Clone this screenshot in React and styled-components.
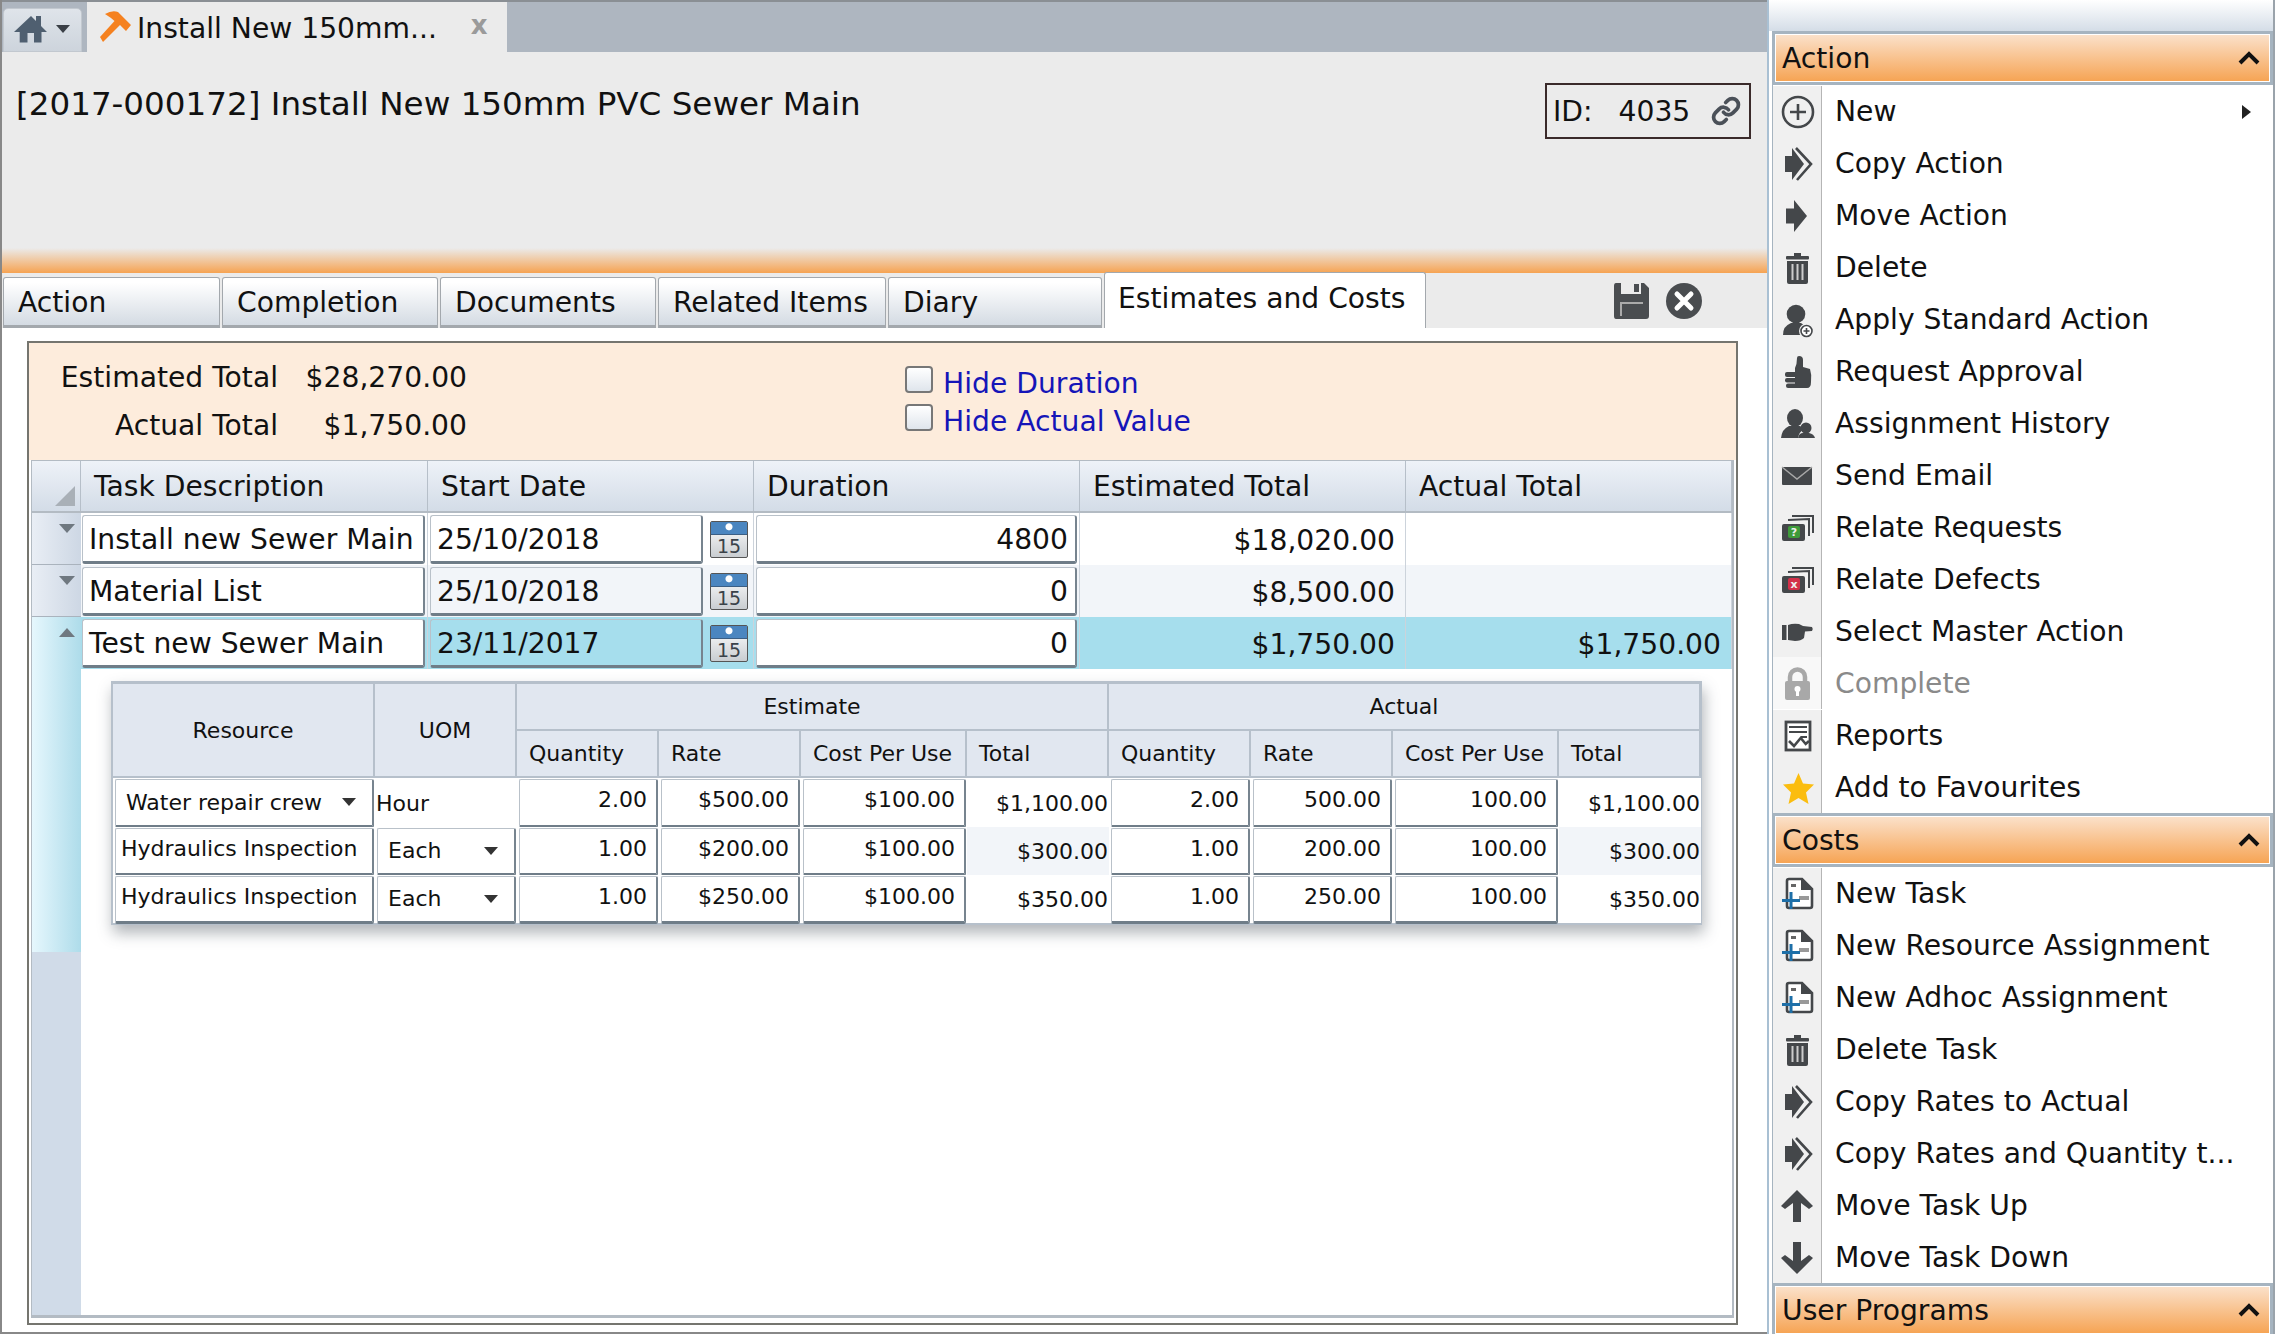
import styled, { createGlobalStyle } from 'styled-components';
import { Link } from 'lucide-react';

const GlobalStyle = createGlobalStyle`
	html, body {
		margin: 0;
		padding: 0;
		width: 2275px;
		height: 1334px;
		overflow: hidden;
		background: #fff;
	}
	* {
		box-sizing: border-box;
	}
	body {
		font-family: 'DejaVu Sans', Verdana, sans-serif;
		font-size: 28.2px;
		color: #111;
	}
`;

const Frame = styled.div`
	display: flex;
	width: 2275px;
	height: 1334px;
	overflow: hidden;
`;

const Main = styled.div`
	display: flex;
	flex-direction: column;
	width: 1767px;
	height: 100%;
	border-left: 2px solid #888;
	border-bottom: 2px solid #888;
	background: #fff;
`;

const TopBar = styled.div`
	display: flex;
	align-items: flex-end;
	height: 52px;
	padding-left: 1px;
	background: #aeb6c0;
	border-top: 2px solid #8a8f94;
`;

const HomeBtn = styled.div`
	display: flex;
	align-items: center;
	gap: 9px;
	width: 79px;
	height: 44px;
	padding: 0 0 2px 10px;
	background: linear-gradient(#dfe4ea, #cdd4dc);
	border-radius: 5px 5px 0 0;
	border: 1px solid #c2c8cf;
`;

const Caret = styled.span`
	width: 0;
	height: 0;
	border-left: 7px solid transparent;
	border-right: 7px solid transparent;
	border-top: 8px solid ${(p) => p.color || '#3a3f46'};
`;

const DocTab = styled.div`
	display: flex;
	align-items: center;
	width: 420px;
	height: 50px;
	margin-left: 5px;
	padding-left: 13px;
	background: #ebebeb;
`;

const DocTitle = styled.span`
	margin: 2px 0 0 5px;
	white-space: nowrap;
`;

const DocClose = styled.span`
	margin-left: 34px;
	margin-bottom: 4px;
	font-weight: 700;
	font-size: 26px;
	color: #9a9a9a;
`;

const Header = styled.div`
	display: flex;
	justify-content: space-between;
	align-items: flex-start;
	height: 196px;
	padding: 32px 16px 0 14px;
	background: #ebebeb;
`;

const Title = styled.h1`
	margin: 0;
	font-size: 32.6px;
	font-weight: 400;
	line-height: 40px;
`;

const IdBox = styled.div`
	display: flex;
	align-items: center;
	width: 206px;
	height: 56px;
	margin-top: -1px;
	padding-left: 6px;
	border: 2px solid #3a2a2a;
	white-space: nowrap;
`;

const IdValue = styled.span`
	margin-left: 26px;
`;

const IdLink = styled(Link)`
	margin-left: 21px;
	color: #4a5058;
`;

const OrangeBar = styled.div`
	height: 25px;
	background: linear-gradient(#ebebeb, #f6a352);
`;

const TabStrip = styled.div`
	display: flex;
	align-items: flex-end;
	gap: 2px;
	height: 55px;
	padding-left: 1px;
	background: #ebebeb;
`;

const Tab = styled.div`
	display: flex;
	align-items: center;
	width: ${(p) => p.w}px;
	height: 51px;
	padding: 2px 0 0 14px;
	background: linear-gradient(#fff 10%, #d4dbe3);
	border: 1px solid #a3a8ad;
	border-bottom-width: 3px;
	border-radius: 3px 3px 0 0;
	white-space: nowrap;
`;

const ActiveTab = styled(Tab)`
	height: 56px;
	padding: 0 0 4px 13px;
	background: #fff;
	border-bottom: none;
`;

const TabTools = styled.div`
	display: flex;
	gap: 17px;
	margin-left: 185px;
	padding-bottom: 9px;
`;

const Content = styled.div`
	flex: 1;
	min-height: 0;
	padding: 13px 29px 7px 25px;
`;

const Panel = styled.div`
	display: flex;
	flex-direction: column;
	height: 100%;
	padding: 0 2px 5px 2px;
	border: 2px solid #75756f;
`;

const Summary = styled.div`
	display: flex;
	height: 117px;
	margin: 0 -2px;
	padding-top: 10px;
	background: #fdecdc;
`;

const Totals = styled.div`
	display: grid;
	grid-template-columns: 249px 189px;
	grid-auto-rows: 48px;
	align-items: center;
	justify-items: end;
	width: 876px;
`;

const Toggles = styled.div`
	display: flex;
	flex-direction: column;
	gap: 11px;
	padding-top: 17px;
`;

const ToggleRow = styled.label`
	display: flex;
	align-items: center;
	gap: 10px;
	height: 27px;
	color: #1515b8;
`;

const Check = styled.span`
	width: 28px;
	height: 27px;
	margin-bottom: 9px;
	background: linear-gradient(#fff, #dfe5ec);
	border: 2px solid #777;
	border-radius: 4px;
`;

const Grid = styled.div`
	display: flex;
	flex-direction: column;
	flex: 1;
	min-height: 0;
	border: 1px solid #b3bbc3;
	border-width: 1px 2px 3px 1px;
`;

const GridHead = styled.div`
	display: grid;
	grid-template-columns: 49px 347px 326px 326px 326px 1fr;
	height: 52px;
	background: linear-gradient(#eef2f8, #d3dce7);
	border-bottom: 2px solid #b3bbc3;
`;

const HeadCell = styled.div`
	display: flex;
	align-items: center;
	padding-left: 13px;
	border-right: 1px solid #b6bfc9;
`;

const Corner = styled(HeadCell)`
	align-items: flex-end;
	justify-content: flex-end;
	padding: 0 5px 5px 0;
	&::after {
		content: '';
		border-left: 20px solid transparent;
		border-bottom: 20px solid #a9b0b7;
	}
`;

const GridBody = styled.div`
	display: flex;
	flex: 1;
	min-height: 0;
`;

const Gutter = styled.div`
	width: 49px;
	background: #d0dbe8;
`;

const GutterCell = styled.div`
	display: flex;
	justify-content: flex-end;
	height: ${(p) => p.h}px;
	padding: 11px 6px 0 0;
	background: ${(p) =>
		p.open
			? 'linear-gradient(90deg, #e6f7fd, #aedcea)'
			: 'linear-gradient(90deg, #e9eef5, #cdd7e4)'};
	border-bottom: ${(p) => (p.open ? 'none' : '1px solid #aab3bd')};
`;

const Toggle = styled.span`
	width: 0;
	height: 0;
	border-left: 8px solid transparent;
	border-right: 8px solid transparent;
	${(p) => (p.up ? 'border-bottom' : 'border-top')}: 9px solid #6f7880;
`;

const Rows = styled.div`
	flex: 1;
	min-width: 0;
`;

const Row = styled.div`
	display: grid;
	grid-template-columns: 347px 326px 326px 326px 1fr;
	height: 52px;
	background: ${(p) => p.bg || '#fff'};
`;

const Cell = styled.div`
	display: flex;
	align-items: center;
	justify-content: ${(p) => (p.start ? 'flex-start' : 'flex-end')};
	padding: ${(p) => (p.start ? `1px 2px 1px ${p.first ? 1 : 2}px` : '2px 10px 0 0')};
	border-right: 1px solid #ccd3db;
`;

const Input = styled.div`
	display: flex;
	align-items: center;
	justify-content: ${(p) => (p.right ? 'flex-end' : 'flex-start')};
	width: ${(p) => (p.w ? `${p.w}px` : '100%')};
	height: 49px;
	padding: ${(p) => (p.right ? '2px 7px 0 0' : '2px 0 0 6px')};
	background: ${(p) => p.bg || '#fff'};
	border: 1px solid #b9c1c9;
	border-bottom: 3px solid #6f7d88;
	border-right: 2px solid #77848f;
	border-radius: 3px;
	white-space: nowrap;
	overflow: hidden;
`;

const Detail = styled.div`
	display: grid;
	grid-template-columns: 262px 142px 142px 142px 166px 142px 142px 142px 166px 142px;
	grid-template-rows: 47px 47px 49px 48px 48px;
	width: 1591px;
	margin: 12px 0 0 30px;
	border: 2px solid #b6c0cb;
	border-top-width: 3px;
	background: #fff;
	font-size: 22px;
	box-shadow: 2px 8px 14px rgba(60, 70, 80, 0.4);
`;

const DHead = styled.div`
	display: flex;
	align-items: center;
	justify-content: ${(p) => (p.left ? 'flex-start' : 'center')};
	padding-left: ${(p) => (p.left ? '12px' : 0)};
	${(p) => p.rows && 'grid-row: 1 / span 2;'}
	${(p) => p.cols && `grid-column: span ${p.cols};`}
	background: #e1e7f0;
	border-right: 2px solid #b6c0cb;
	border-bottom: 2px solid #b6c0cb;
`;

const DCell = styled.div`
	display: flex;
	align-items: center;
	justify-content: ${(p) => (p.right ? 'flex-end' : 'flex-start')};
	padding: ${(p) => (p.right ? '1px 1px 0 0' : '1px 0 0 1px')};
	background: ${(p) => p.bg || '#fff'};
	min-width: 0;
`;

const DInput = styled.div`
	display: flex;
	align-items: center;
	justify-content: ${(p) => (p.right ? 'flex-end' : 'space-between')};
	height: calc(100% + 1px);
	margin: 0 1px;
	width: calc(100% - 2px);
	padding: ${(p) => (p.right ? '0 9px 5px 0' : `0 16px ${p.lift ? 4 : 0}px ${p.pad}px`)};
	background: #fff;
	border: 1px solid #b9c1c9;
	border-bottom: 3px solid #6f7d88;
	border-right: 2px solid #77848f;
	border-radius: 2px;
	white-space: nowrap;
	overflow: hidden;
`;

const Calendar = styled.div`
	display: flex;
	flex-direction: column;
	width: 38px;
	height: 37px;
	margin-left: 7px;
	border: 1px solid #555;
	border-radius: 2px;
	background: linear-gradient(#fff, #c9cdd1);
	font-size: 19px;
	line-height: 23px;
	text-align: center;
	color: #3a4249;
	&::before {
		content: '';
		flex: none;
		height: 12px;
		background: radial-gradient(circle at 50% 40%, #fff 3px, transparent 4px), #4b86c0;
		border-bottom: 1px solid #3b5f85;
	}
`;

const Side = styled.aside`
	display: flex;
	flex-direction: column;
	width: 508px;
	height: 100%;
	padding-left: 3px;
	border-left: 2px solid #a9c0d3;
	border-right: 2px solid #9aa3ab;
	background: #fff;
`;

const SideTop = styled.div`
	flex: none;
	height: 31px;
	margin-left: -3px;
	background: linear-gradient(#fff, #d4dde7);
`;

const SecHead = styled.div`
	flex: none;
	display: flex;
	align-items: center;
	justify-content: space-between;
	height: 54px;
	padding: 0 10px 0 7px;
	background: linear-gradient(#fbe2cc, #f6a352);
	border: 3px solid #a6b4c0;
	outline: 1px solid #fff;
	outline-offset: -4px;
`;

const Chevron = styled.svg`
	width: 22px;
	height: 14px;
`;

const Item = styled.div`
	flex: none;
	display: flex;
	align-items: center;
	height: 52px;
	padding-top: ${(p) => (p.off ? 0 : 1)}px;
	color: ${(p) => (p.off ? '#8a8a8a' : '#111')};
	border-left: 1px solid #a6b4c0;
`;

const IconCol = styled.div`
	display: flex;
	align-items: center;
	justify-content: center;
	width: 49px;
	height: 52px;
	margin-right: 13px;
	background: ${(p) => (p.off ? '#f8f8f8' : '#f0f0f0')};
	border-right: 1px solid #b5b5b5;
`;

const MoreArrow = styled.span`
	margin-left: auto;
	margin-right: 22px;
	border-top: 7px solid transparent;
	border-bottom: 7px solid transparent;
	border-left: 9px solid #222;
`;

const Svg = ({ children }) => (
	<svg width="36" height="36" viewBox="0 0 36 36">
		{children}
	</svg>
);

const dark = '#44474a';

const taskIcon = (
	<Svg>
		<path d="M8 5 Q8 3 10 3 L23 3 L33 13 L33 30 Q33 32 31 32 L10 32 Q8 32 8 30 Z" fill="#fff" stroke={dark} strokeWidth="2.6" />
		<path d="M22 3 L22 14 L33 14 Z" fill={dark} />
		<rect x="12" y="8" width="5" height="3" fill="#666" />
		<rect x="20" y="20" width="10" height="4" fill="#999" />
		<rect x="3" y="23" width="18" height="3" fill="#1d6fa8" />
		<rect x="10.5" y="16" width="3" height="17" fill="#1d6fa8" />
	</Svg>
);

const relateIcon = (fill, mark) => (
	<Svg>
		<path d="M13 6 H34 V23" fill="none" stroke={dark} strokeWidth="2" />
		<path d="M9 10 L30 9 V26" fill="none" stroke={dark} strokeWidth="2" />
		<rect x="3" y="14" width="23" height="17" rx="2" fill={dark} />
		<rect x="9" y="16" width="12" height="12" rx="2" fill={fill} />
		<text x="15" y="26" fontSize="11" fontWeight="700" textAnchor="middle" fill="#eee" fontFamily="DejaVu Sans">
			{mark}
		</text>
	</Svg>
);

const trash = (
	<Svg>
		<rect x="7" y="6" width="23" height="3.5" rx="1" fill={dark} />
		<rect x="15" y="3" width="7" height="3" fill={dark} />
		<path d="M8 11 H29 V32 Q29 34 27 34 H10 Q8 34 8 32 Z" fill={dark} />
		<path d="M13.5 14 V30 M18.5 14 V30 M23.5 14 V30" stroke="#ccc" strokeWidth="2" />
	</Svg>
);

const copyArrow = (
	<Svg>
		<path d="M6 10 H13 V2 L25 18 L13 34 V26 H6 Z" fill={dark} />
		<path d="M17 2 L32 18 L18 34" fill="none" stroke={dark} strokeWidth="2.6" />
	</Svg>
);

const icons = {
	plus: (
		<Svg>
			<circle cx="19" cy="18" r="15" fill="none" stroke={dark} strokeWidth="2.6" />
			<path d="M19 10 V26 M11 18 H27" stroke={dark} strokeWidth="2.6" />
		</Svg>
	),
	copy: copyArrow,
	move: (
		<Svg>
			<path d="M7 10.5 H15 V2 L28 18 L15 34 V25.5 H7 Z" fill={dark} />
		</Svg>
	),
	trash,
	applyUser: (
		<Svg>
			<circle cx="17" cy="12" r="9.3" fill={dark} />
			<path d="M4 33 Q4 24 12 21 L22 21 Q28 24 30 33 Z" fill={dark} />
			<circle cx="27.5" cy="29" r="7.5" fill="#f0f0f0" />
			<circle cx="27.5" cy="29" r="5.5" fill="#fff" stroke={dark} strokeWidth="1.6" />
			<path d="M27.5 26 V32 M24.5 29 H30.5" stroke={dark} strokeWidth="1.6" />
		</Svg>
	),
	thumb: (
		<Svg>
			<path d="M16 14 Q18 10 18 4 Q18 2 20 2 Q24 2 24 6 L24 13 L31 15 Q33 21 32 28 Q32 34 28 34 L16 34 Z" fill={dark} />
			<rect x="6" y="18" width="12" height="5" rx="2" fill={dark} />
			<rect x="6" y="24" width="12" height="4.5" rx="2" fill={dark} />
			<rect x="7" y="29.5" width="11" height="4.5" rx="2" fill={dark} />
		</Svg>
	),
	users: (
		<Svg>
			<ellipse cx="16" cy="12" rx="8" ry="9" fill={dark} />
			<path d="M2 32 Q3 23 10 20 L21 20 Q24 22 25 23 Q20 26 19 32 Z" fill={dark} />
			<circle cx="27" cy="22" r="5.5" fill={dark} />
			<path d="M19 32 Q20 27 24 27 L30 27 Q35 28 36 32 Z" fill={dark} />
		</Svg>
	),
	mail: (
		<Svg>
			<rect x="3" y="9" width="30" height="18" rx="1" fill={dark} />
			<path d="M3 9 L18 21 L33 9" fill="none" stroke="#a8a8a8" strokeWidth="1.5" />
		</Svg>
	),
	requests: relateIcon('#3e9b3a', '?'),
	defects: relateIcon('#d3304a', 'x'),
	hand: (
		<Svg>
			<rect x="3" y="11" width="4.5" height="15" fill={dark} />
			<path d="M9 11 Q14 9 20 10 L24 12 L33 13 Q34.5 15 33 17 L26 17.5 L25 24 Q22 27 16 27 L9 26 Z" fill={dark} />
		</Svg>
	),
	lock: (
		<Svg>
			<path d="M11 17 V12 A7.5 7.5 0 0 1 26 12 V17" fill="none" stroke="#a8a8a8" strokeWidth="4.5" />
			<rect x="6" y="16" width="25" height="19" rx="2" fill="#a8a8a8" />
			<rect x="17" y="24" width="3" height="7" fill="#fff" />
			<circle cx="18.5" cy="24" r="3" fill="#fff" />
		</Svg>
	),
	reports: (
		<Svg>
			<rect x="7" y="4" width="24" height="28" fill="#fff" stroke={dark} strokeWidth="2.8" />
			<path d="M10 9 H28 M10 14 H28 M22 19 H28" stroke={dark} strokeWidth="1.8" />
			<path d="M10 23 L15 28 L21.7 20 L26.7 26 L30 23" fill="none" stroke={dark} strokeWidth="2.6" />
		</Svg>
	),
	star: (
		<Svg>
			<path d="M19.5 3 L24 13.5 L35 14.5 L27 22.5 L29.5 34 L19.5 28 L9.5 34 L12 22.5 L4 14.5 L15 13.5 Z" fill="#fbbd0f" />
		</Svg>
	),
	task: taskIcon,
	up: (
		<Svg>
			<path d="M18 2 L34 18 L30 21 L22 15 L22 34 L14 34 L14 15 L6 21 L2 18 Z" fill={dark} />
		</Svg>
	),
	down: (
		<Svg>
			<path d="M18 34 L34 18 L30 15 L22 21 L22 2 L14 2 L14 21 L6 15 L2 18 Z" fill={dark} />
		</Svg>
	),
};

const actionItems = [
	['plus', 'New', true],
	['copy', 'Copy Action'],
	['move', 'Move Action'],
	['trash', 'Delete'],
	['applyUser', 'Apply Standard Action'],
	['thumb', 'Request Approval'],
	['users', 'Assignment History'],
	['mail', 'Send Email'],
	['requests', 'Relate Requests'],
	['defects', 'Relate Defects'],
	['hand', 'Select Master Action'],
	['lock', 'Complete'],
	['reports', 'Reports'],
	['star', 'Add to Favourites'],
];

const costItems = [
	['task', 'New Task'],
	['task', 'New Resource Assignment'],
	['task', 'New Adhoc Assignment'],
	['trash', 'Delete Task'],
	['copy', 'Copy Rates to Actual'],
	['copy', 'Copy Rates and Quantity t...'],
	['up', 'Move Task Up'],
	['down', 'Move Task Down'],
];

const tabs = [
	['Action', 217],
	['Completion', 216],
	['Documents', 216],
	['Related Items', 228],
	['Diary', 214],
];

const tasks = [
	{ name: 'Install new Sewer Main', date: '25/10/2018', duration: '4800', est: '$18,020.00', act: '' },
	{ name: 'Material List', date: '25/10/2018', duration: '0', est: '$8,500.00', act: '', bg: '#f2f5f9', dateBg: '#f2f5f9' },
	{ name: 'Test new Sewer Main', date: '23/11/2017', duration: '0', est: '$1,750.00', act: '$1,750.00', bg: '#a6deed', dateBg: '#a6deed' },
];

const resources = [
	{ name: 'Water repair crew', arrow: true, uom: 'Hour', est: ['2.00', '$500.00', '$100.00', '$1,100.00'], act: ['2.00', '500.00', '100.00', '$1,100.00'] },
	{ name: 'Hydraulics Inspection', uom: 'Each', est: ['1.00', '$200.00', '$100.00', '$300.00'], act: ['1.00', '200.00', '100.00', '$300.00'], bg: '#f2f5f9' },
	{ name: 'Hydraulics Inspection', uom: 'Each', est: ['1.00', '$250.00', '$100.00', '$350.00'], act: ['1.00', '250.00', '100.00', '$350.00'] },
];

const subHeads = ['Quantity', 'Rate', 'Cost Per Use', 'Total', 'Quantity', 'Rate', 'Cost Per Use', 'Total'];

const UpChevron = () => (
	<Chevron viewBox="0 0 22 14">
		<path d="M2 12 L11 3 L20 12" fill="none" stroke="#111" strokeWidth="4" />
	</Chevron>
);

function SideSection({ title, items }) {
	return (
		<>
			<SecHead>
				{title}
				<UpChevron />
			</SecHead>
			{items.map(([icon, label, more]) => (
				<Item key={label} off={label === 'Complete'}>
					<IconCol off={label === 'Complete'}>{icons[icon]}</IconCol>
					{label}
					{more && <MoreArrow />}
				</Item>
			))}
		</>
	);
}

function ResourceRow({ r }) {
	const money = (vals) =>
		vals.map((v, i) =>
			i === 3 ? (
				<DCell right bg={r.bg} key={i}>
					{v}
				</DCell>
			) : (
				<DCell key={i}>
					<DInput right>{v}</DInput>
				</DCell>
			),
		);
	return (
		<>
			<DCell>
				<DInput pad={r.arrow ? 10 : 5} lift={!r.arrow}>
					{r.name}
					{r.arrow && <Caret color="#333" />}
				</DInput>
			</DCell>
			<DCell>
				{r.uom === 'Hour' ? (
					r.uom
				) : (
					<DInput pad={10}>
						{r.uom}
						<Caret color="#333" />
					</DInput>
				)}
			</DCell>
			{money(r.est)}
			{money(r.act)}
		</>
	);
}

function App() {
	return (
		<>
			<GlobalStyle />
			<Frame>
				<Main>
					<TopBar>
						<HomeBtn>
							<svg width="33" height="27" viewBox="0 0 33 27">
								<path d="M17 0 L22 5 V0 H27 V10 L33 16 H27.5 V26.5 H20 V17 H13.5 V26.5 H5.7 V16 H0 Z" fill="#4f5f70" />
							</svg>
							<Caret />
						</HomeBtn>
						<DocTab>
							<svg width="32" height="32" viewBox="0 0 32 32">
								<path d="M5 3 Q12 -1 18 1 L31 14 L26 20 L20 14 L3 31 L0 26 L14.5 10 L11 7 Q8 5 5 3 Z" fill="#f5811f" />
							</svg>
							<DocTitle>Install New 150mm...</DocTitle>
							<DocClose>x</DocClose>
						</DocTab>
					</TopBar>
					<Header>
						<Title>[2017-000172] Install New 150mm PVC Sewer Main</Title>
						<IdBox>
							ID:
							<IdValue>4035</IdValue>
							<IdLink size={30} strokeWidth={3} />
						</IdBox>
					</Header>
					<OrangeBar />
					<TabStrip>
						{tabs.map(([label, w]) => (
							<Tab key={label} w={w}>
								{label}
							</Tab>
						))}
						<ActiveTab w={322}>Estimates and Costs</ActiveTab>
						<TabTools>
							<svg width="36" height="36" viewBox="0 0 36 36">
								<path d="M1 3 Q1 0 3 0 L8 0 L8 11 L28 11 L28 0 L31 0 L36 5 L36 33 Q36 36 33 36 L3 36 Q1 36 1 33 Z" fill="#4a4d50" />
								<path d="M8 33 L8 20 L30 20" fill="none" stroke="#aaa" strokeWidth="2" />
								<rect x="21" y="1" width="5" height="8" fill="#4a4d50" />
							</svg>
							<svg width="36" height="36" viewBox="0 0 36 36">
								<circle cx="18" cy="18" r="18" fill="#4a4d50" />
								<path d="M11 11 L25 25 M25 11 L11 25" stroke="#fff" strokeWidth="5" strokeLinecap="round" />
							</svg>
						</TabTools>
					</TabStrip>
					<Content>
						<Panel>
							<Summary>
								<Totals>
									<span>Estimated Total</span>
									<span>$28,270.00</span>
									<span>Actual Total</span>
									<span>$1,750.00</span>
								</Totals>
								<Toggles>
									<ToggleRow>
										<Check />
										Hide Duration
									</ToggleRow>
									<ToggleRow>
										<Check />
										Hide Actual Value
									</ToggleRow>
								</Toggles>
							</Summary>
							<Grid>
								<GridHead>
									<Corner />
									<HeadCell>Task Description</HeadCell>
									<HeadCell>Start Date</HeadCell>
									<HeadCell>Duration</HeadCell>
									<HeadCell>Estimated Total</HeadCell>
									<HeadCell>Actual Total</HeadCell>
								</GridHead>
								<GridBody>
									<Gutter>
										<GutterCell h={52}>
											<Toggle />
										</GutterCell>
										<GutterCell h={52}>
											<Toggle />
										</GutterCell>
										<GutterCell h={335} open>
											<Toggle up />
										</GutterCell>
									</Gutter>
									<Rows>
										{tasks.map((t) => (
											<Row key={t.name} bg={t.bg}>
												<Cell start first>
													<Input>{t.name}</Input>
												</Cell>
												<Cell start>
													<Input w={273} bg={t.dateBg}>
														{t.date}
													</Input>
													<Calendar>15</Calendar>
												</Cell>
												<Cell start>
													<Input right>{t.duration}</Input>
												</Cell>
												<Cell>{t.est}</Cell>
												<Cell>{t.act}</Cell>
											</Row>
										))}
										<Detail>
											<DHead rows>Resource</DHead>
											<DHead rows>UOM</DHead>
											<DHead cols={4}>Estimate</DHead>
											<DHead cols={4}>Actual</DHead>
											{subHeads.map((h, i) => (
												<DHead left key={i}>
													{h}
												</DHead>
											))}
											{resources.map((r, n) => (
												<ResourceRow key={n} r={r} />
											))}
										</Detail>
									</Rows>
								</GridBody>
							</Grid>
						</Panel>
					</Content>
				</Main>
				<Side>
					<SideTop />
					<SideSection title="Action" items={actionItems} />
					<SideSection title="Costs" items={costItems} />
					<SecHead>
						User Programs
						<UpChevron />
					</SecHead>
				</Side>
			</Frame>
		</>
	);
}

export default App;
